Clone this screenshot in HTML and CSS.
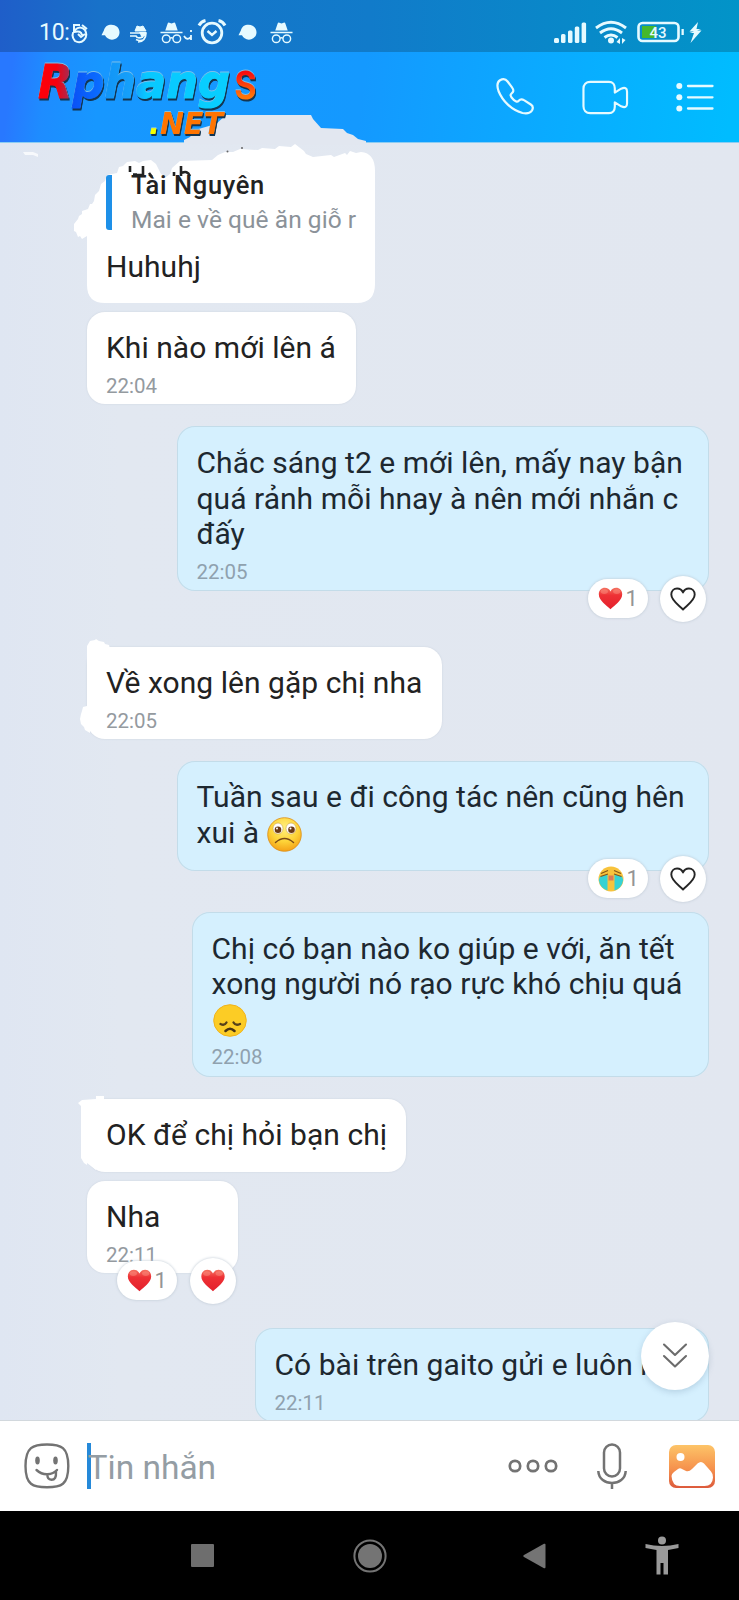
FILE: index.html
```html
<!DOCTYPE html>
<html lang="vi">
<head>
<meta charset="utf-8">
<title>Tin nhắn</title>
<link rel="stylesheet" href="styles.css">
</head>
<body>
<svg width="0" height="0" class="defs">
  <defs>
    <linearGradient id="heartFill" x1="0" y1="0" x2="0" y2="1"><stop offset="0" stop-color="#f4705f"/><stop offset=".35" stop-color="#ee3135"/><stop offset="1" stop-color="#e3202c"/></linearGradient>
    <radialGradient id="face" cx=".5" cy=".3" r=".75"><stop offset="0" stop-color="#fff07c"/><stop offset=".55" stop-color="#fdd338"/><stop offset="1" stop-color="#f39a12"/></radialGradient>
    <linearGradient id="photo" x1="0" y1="0" x2="0" y2="1"><stop offset="0" stop-color="#fdc468"/><stop offset=".55" stop-color="#f6924d"/><stop offset="1" stop-color="#dc5a3c"/></linearGradient>
    <linearGradient id="brand" gradientUnits="userSpaceOnUse" x1="37" y1="0" x2="232" y2="0"><stop offset="0" stop-color="#ff0008"/><stop offset=".1" stop-color="#f5000e"/><stop offset=".165" stop-color="#a82a52"/><stop offset=".175" stop-color="#0a50f5"/><stop offset=".32" stop-color="#0a6cff"/><stop offset=".36" stop-color="#1295f6"/><stop offset=".5" stop-color="#16a2fb"/><stop offset=".56" stop-color="#08c8ff"/><stop offset="1" stop-color="#08cfff"/></linearGradient>
    <linearGradient id="brandS" x1="0" y1="0" x2="0" y2="1"><stop offset=".35" stop-color="#f80d10"/><stop offset=".75" stop-color="#ff7408"/></linearGradient>
    <symbol id="heart" viewBox="0 0 26 24"><path d="M13 23.300C9 19 .8 14.500.8 7.600.8 3.600 3.600.9 7.100.9c2.700 0 4.800 1.400 5.900 3.700C14.100 2.300 16.200.9 18.900.9c3.500 0 6.300 2.700 6.300 6.700 0 6.900-8.200 11.400-12.200 15.700z" fill="url(#heartFill)"/><ellipse cx="6.500" cy="4.800" rx="3.800" ry="2.500" fill="#ffb09a" opacity=".35"/><ellipse cx="19.500" cy="4.800" rx="3.800" ry="2.500" fill="#ffb09a" opacity=".35"/></symbol>
    <symbol id="heartLine" viewBox="0 0 26 24"><path d="M13 22.500C9.500 18.500 1.300 14 1.300 7.600 1.300 4 3.900 1.500 7.100 1.500c2.800 0 4.900 1.600 5.900 4 1-2.400 3.100-4 5.900-4 3.200 0 5.800 2.500 5.800 6.100 0 6.400-8.200 10.900-11.700 14.900z" fill="none" stroke="#252525" stroke-width="1.900" stroke-linejoin="round"/></symbol>
    <symbol id="spy" viewBox="0 0 24 22"><path d="M5.500 8.500 8 1q.5-1.200 1.800-.7l2.200.7 2.200-.7q1.300-.5 1.800.7l2.500 7.500zM.5 9.800h23v1.500H.5z" fill="currentColor" stroke="none"/><g fill="none" stroke="currentColor" stroke-width="1.500"><circle cx="6.500" cy="17" r="4"/><circle cx="17.500" cy="17" r="4"/><path d="M10.500 16.500q1.500-1 3 0"/></g></symbol>
    <symbol id="chatdot" viewBox="0 0 20 18"><path d="M3 7C4 2.500 7 .8 11 .8c4.500 0 8.500 3 8.500 8 0 4.500-3.500 7.700-8 7.700-3.500 0-6-1.800-7.300-4.500L.5 12z" fill="currentColor" stroke="none"/></symbol>
  </defs>
</svg>

<div class="phone">
  <div class="top">
    <div class="status">
      <span class="clock">10:</span>
      <svg class="notices" width="225" height="30" viewBox="70 18 225 30" fill="none" stroke="currentColor">
        <path d="M80 25h-6v7q7-2 8 3M82 25l5 4M75 30q5-5 10 0 3 6-1 10-4 4-9 1-5-6 0-11M78 34l3 3 4-3" stroke-width="2"/>
        <use href="#chatdot" x="101" y="23.500" width="19" height="18"/>
        <path d="M135 31l2-5 3 1 3-1 3 5z" fill="currentColor" stroke-width="1"/><path d="M130 33h16c0 5-3 9-8 9M130 36h6q1 3 7 1M136 39.500q4 2 8 0" stroke-width="1.700"/><path d="M139 32h7v3l-4 3z" fill="currentColor" stroke="none"/>
        <use href="#spy" x="160" y="22" width="23" height="22"/>
        <path d="M184 36q3 5 7 1M191 30v2M191 35v5" stroke-width="1.800"/>
        <circle cx="212" cy="33" r="9.800" stroke-width="2.800"/><path d="m207.500 31 4.500 4 4.500-4" stroke-width="2.400"/><path d="M199 25.500q2-4 6.500-5M225 25.500q-2-4-6.500-5" stroke-width="3"/>
        <use href="#chatdot" x="238" y="23.500" width="19" height="18"/>
        <use href="#spy" x="270" y="22" width="23" height="22"/>
      </svg>
      <svg class="signals" width="150" height="30" viewBox="552 18 150 30" fill="currentColor">
        <rect x="554" y="38" width="5" height="5" rx="1.500"/><rect x="561" y="34" width="4.500" height="9" rx="1.500"/><rect x="568" y="30.500" width="4.500" height="12.500" rx="1.500"/><rect x="574.800" y="26.500" width="4.500" height="16.500" rx="1.500"/><rect x="581.600" y="22.500" width="4.500" height="20.500" rx="1.500"/>
        <g fill="none" stroke="currentColor" stroke-width="2.900"><path d="M596 28q15-11.500 30 0M600 33q11-8.500 22 0M604.500 37.500q6.500-5 13 0"/></g><circle cx="611" cy="40.500" r="3"/><path d="m616.500 42 3.500-4v6zM625.500 40l-3.500 4v-6z"/>
        <rect x="638.500" y="23" width="40" height="18" rx="4" fill="none" stroke="currentColor" stroke-width="2.600"/><rect x="642" y="26" width="14" height="12" fill="#45b82b"/><rect x="681.500" y="29" width="2.300" height="6"/>
        <text x="649.500" y="38" class="battery">43</text>
        <path d="M698 22 689.500 31.500h4.500l-4.500 1.500h4.500l-3.500 10 11-12.500h-4.500l4-1.500h-4.500z"/>
      </svg>
    </div>
    <div class="header">
      <svg class="call" width="38" height="38" viewBox="0 0 38 38"><path d="M4 2.300C1.300 4 .8 8 2.500 13c4 10 13 19 24 22 4 .8 8-.2 9.500-2.500 1.300-2.400.8-4.700-1.200-6L28 22.200c-2.200-1.500-3.700-1.200-5.300.5-1.200 1.400-2.700 1.200-5-.8-2-1.800-3-3.200-3.200-4.700 0-1.600 2.500-2.300 2.800-4.200.2-1.300-.4-2.400-1.500-3.900L11.600 3.500C9.500.7 7 .5 4 2.300z" fill="none" stroke="currentColor" stroke-width="2.200"/></svg>
      <svg class="video" width="47" height="35" viewBox="0 0 48 35"><g fill="none" stroke="currentColor" stroke-width="2.200" stroke-linejoin="round"><path d="M8.500 1.500h19c4 0 6 3 6 6.500v4.500l6.500-4q6-2.500 6 3v12q0 5.500-6 3l-6.500-4V27c0 3.500-2 6.500-6 6.500h-19c-4.500 0-7-3-7-7V8.500c0-4 2.500-7 7-7z"/></g></svg>
      <svg class="list" width="38" height="30" viewBox="0 0 38 30"><g fill="currentColor"><circle cx="3.300" cy="4" r="3"/><circle cx="3.300" cy="15.300" r="3"/><circle cx="3.300" cy="26.500" r="3"/></g><path d="M12 4h24.500M12 15.300h24.500M12 26.500h24.500" stroke="currentColor" stroke-width="2.300" stroke-linecap="round"/></svg>
    </div>
  </div>

  <div class="chat">
    <div class="bubble quoted">
      <svg class="torn" width="320" height="194" viewBox="70 112 320 194">
        <path d="M184 144 184 140 190 137 195 130 216 124 226 115H311L313 119 321 128 343 129 347 133 353 135 358 139 366 141V145z" fill="#e2e7f0"/>
        <path d="M24 153" fill="none"/>
        <path d="M87 285V236L82 239 80 236 78 237 76 232 74 231V224L78 219 79 216 82 214 82 211 88 209 90 204 92 204 94 201 95 195 99 191 101 184 105 181 107 175 117 173 119 167 123 166 127 162 135 161 139 163 143 161 151 160 156 164 161 174 166 177 170 174 172 168 180 161 212 160 218 155 225 152 233 152 240 149 258 150 262 148 275 149 279 146 291 147 295 144 304 151 306 154 313 157 331 155 334 157 345 153 347 155 350 151 356 153 361 152Q375 153 375 171V284Q375 303 357 303H105Q87 303 87 285z" fill="#fff"/>
        <path d="M130 166v6M137 174.500h-4M143 166v9h-6M149 173l3 4M174 172v4M181 166v10M182 173q5-3 8 3" fill="none" stroke="#222" stroke-width="2.600"/>
        <circle cx="227.500" cy="151.500" r="1" fill="#666"/><circle cx="242" cy="148" r="1" fill="#666"/>
      </svg>
      <div class="quote"><b>Tài Nguyên</b><span>Mai e về quê ăn giỗ r</span></div>
      <p>Huhuhj</p>
    </div>
    <svg class="speck" width="16" height="6" viewBox="0 0 16 6"><path d="M0 0h10l5 2v3l-5-2H2z" fill="#f7f9fc"/></svg>
    <div class="bubble b2"><p>Khi nào mới lên á</p><time>22:04</time></div>

    <div class="bubble mine b3"><p>Chắc sáng t2 e mới lên, mấy nay bận<br>quá rảnh mỗi hnay à nên mới nhắn c<br>đấy</p><time>22:05</time>
      <div class="reacts"><span class="pill"><svg width="25" height="23"><use href="#heart"/></svg>1</span><span class="round"><svg width="26" height="24"><use href="#heartLine"/></svg></span></div>
    </div>

    <div class="bubble b4"><svg class="smudge" width="32" height="104" viewBox="78 638 32 104"><path d="M87 665V646l3-5 5-1 1-1 3 2 5 1 1 2 4 1 1 4v5zM87 706l-4 1-1 4-1 3-1 5 1 5 3 3 1 3 5 3V706z" fill="#fff"/></svg><p>Về xong lên gặp chị nha</p><time>22:05</time></div>

    <div class="bubble mine b5"><p>Tuần sau e đi công tác nên cũng hên<br>xui à <svg class="emoji" width="35" height="35" viewBox="0 0 35 35"><circle cx="17.500" cy="17.500" r="16.800" fill="url(#face)" stroke="#dc8c14" stroke-width=".8"/><ellipse cx="11" cy="11.500" rx="5" ry="5.500" fill="#fff" stroke="#caa04a" stroke-width=".6"/><ellipse cx="24" cy="11.500" rx="5" ry="5.500" fill="#fff" stroke="#caa04a" stroke-width=".6"/><circle cx="11" cy="12.800" r="3.300" fill="#6b3a16"/><circle cx="24.500" cy="12.800" r="3.300" fill="#6b3a16"/><circle cx="10" cy="11.500" r="1" fill="#fff"/><circle cx="23.500" cy="11.500" r="1" fill="#fff"/><path d="M8.500 25.500q9-8 18 0" fill="none" stroke="#7a4a17" stroke-width="1.500" stroke-linecap="round"/></svg></p>
      <div class="reacts"><span class="pill"><svg width="26" height="26" viewBox="0 0 26 26"><circle cx="13" cy="13" r="12.500" fill="#f8c33c"/><path d="M2 10.500 9.500 8.500V24.500Q2 22 .8 14zM24 10.500 16.500 8.500V24.500Q24 22 25.200 14z" fill="#36d2d4"/><path d="M10.500 9.500h5v5h-5z" fill="#d97a58"/><path d="M3 7.500 10 4.500M23 7.500 16 4.500M2.500 10.500 10 8M23.500 10.500 16 8" stroke="#835519" stroke-width="1.300"/></svg>1</span><span class="round"><svg width="26" height="24"><use href="#heartLine"/></svg></span></div>
    </div>

    <div class="bubble mine b6"><p>Chị có bạn nào ko giúp e với, ăn tết<br>xong người nó rạo rực khó chịu quá<br><svg class="emoji flat" width="35" height="33" viewBox="0 0 35 33"><ellipse cx="18" cy="16.500" rx="16.300" ry="15.800" fill="#fccc25" stroke="#f0b31c"/><path d="M8.500 20q4 2 6-1.500M21.500 18.500q2 3.500 6.500 1.500" fill="none" stroke="#56401a" stroke-width="2.300" stroke-linecap="round"/><path d="M13.500 27q4.500-4.500 9 0" fill="none" stroke="#4a3515" stroke-width="2.500" stroke-linecap="round"/></svg></p><time>22:08</time></div>

    <div class="bubble b7"><svg class="smudge" width="36" height="76" viewBox="78 1094 36 76"><path d="M104 1102v-6h-8v3l-14 1-4 3 3 3v52l3 5 3 2v-2l9 7V1102z" fill="#fff"/></svg><p>OK để chị hỏi bạn chị</p></div>
    <div class="bubble b8"><p>Nha</p><time>22:11</time>
      <div class="reacts left"><span class="pill"><svg width="25" height="23"><use href="#heart"/></svg>1</span><span class="round"><svg width="26" height="23"><use href="#heart"/></svg></span></div>
    </div>
    <div class="bubble mine b9"><p>Có bài trên gaito gửi e luôn n</p><time>22:11</time></div>
    <div class="jump"><svg width="26" height="28" viewBox="0 0 26 28"><path d="M2 2.500 13 13 24 2.500M2 14 13 24.500 24 14" fill="none" stroke="#6c6c6c" stroke-width="2.100" stroke-linecap="round" stroke-linejoin="round"/></svg></div>
  </div>

  <div class="composer">
    <svg class="sticker" width="46" height="46" viewBox="0 0 46 46"><g fill="none" stroke="#737373" stroke-width="2.400"><path d="M23 1.500C37 1.500 44.300 4 44.300 23S37 44.300 23 44.300 1.500 42 1.500 23 9 1.500 23 1.500z"/><path d="M12.500 27q5 4.500 11 4.200 6-.2 9.500-4.200M23.500 31.500q-.5 5 4 5.300 5 0 4.500-8" stroke-linecap="round"/></g><ellipse cx="13.500" cy="17.500" rx="2.300" ry="4" fill="#737373"/><ellipse cx="31.500" cy="17.500" rx="2.300" ry="4" fill="#737373"/></svg>
    <div class="field"><span>Tin nhắn</span></div>
    <svg class="more" width="50" height="14" viewBox="0 0 50 14"><g fill="none" stroke="#737373" stroke-width="2.700"><circle cx="7" cy="7" r="5.200"/><circle cx="25" cy="7" r="5.200"/><circle cx="43" cy="7" r="5.200"/></g></svg>
    <svg class="mic" width="30" height="46" viewBox="0 0 30 46"><g fill="none" stroke="#737373" stroke-width="2.500"><rect x="7" y="1.500" width="16" height="32" rx="8"/><path d="M1.300 28C2 44 28 44 28.700 28M15 40v6"/></g></svg>
    <svg class="gallery" width="46" height="43" viewBox="0 0 46 43"><rect width="46" height="43" rx="7" fill="url(#photo)"/><circle cx="11.500" cy="12" r="4" fill="#fff"/><path d="M2.500 31Q2.500 29 5 27L9 24q2-1.500 4 0l4 2q3 1 6-2l5.500-5.500q3.500-3 6.500 0l7 8q2 2 2 6-.5 8.500-8.500 8.500H11Q3 41 2.500 31z" fill="#fff"/></svg>
  </div>

  <div class="nav">
    <svg class="recent" width="23" height="23"><rect width="23" height="23" rx="1" fill="#6e6e6e"/></svg>
    <svg class="home" width="34" height="34" viewBox="0 0 34 34"><circle cx="17" cy="17" r="15.600" fill="none" stroke="#747474" stroke-width="2"/><circle cx="17" cy="17" r="12" fill="#747474"/></svg>
    <svg class="back" width="23" height="26" viewBox="0 0 23 26"><path d="M1 12 21 .8q1.500-.5 1.500 1v22.400q0 1.500-1.500 1L1 14q-1.500-1 0-2z" fill="#747474"/></svg>
    <svg class="access" width="34" height="39" viewBox="0 0 34 39"><circle cx="17" cy="4.500" r="4" fill="#9a9a9a"/><path d="M.5 8Q17 12 33.500 8V12L23 14V38.500H18.500V27H15.500V38.500H11.500V14L.5 12z" fill="#9a9a9a"/></svg>
  </div>

  <svg class="brandmark" width="245" height="90" viewBox="30 54 245 90">
    <text class="techno" x="38" y="98" textLength="192" lengthAdjust="spacingAndGlyphs" fill="url(#brand)" stroke="url(#brand)" stroke-width="1">Rphang</text>
    <text class="ess" x="234" y="99" textLength="23" lengthAdjust="spacingAndGlyphs" fill="url(#brandS)">s</text>
    <text class="net" x="149" y="134" textLength="74" lengthAdjust="spacingAndGlyphs" fill="#ff7400"><tspan fill="#f4ff00">.</tspan>NET</text>
  </svg>
</div>
</body>
</html>
```
FILE: styles.css
```css
* { box-sizing: border-box; }
body { margin: 0; font-family: Roboto, "Noto Sans", sans-serif; background: #000; }
svg { display: block; flex: none; }
.defs { position: absolute; }
.phone { position: relative; width: 739px; height: 1600px; display: flex; flex-direction: column; overflow: hidden; }

.top { height: 143px; flex: none; color: #e6faff; background: linear-gradient(97deg, #2878ff 20px, #1e8cff 55px, #1797ff 110px, #1499ff 370px, #00bcff 739px); border-bottom: 1px solid #8ccdf3; }
.status { height: 52px; display: flex; align-items: center; padding: 14px 37px 0 39px; background: linear-gradient(90deg, #1f5ec9, #1872c9 100px, #117bca 370px, #0294c8 739px); }
.clock { width: 31px; font-size: 23px; line-height: 26px; letter-spacing: -.3px; white-space: nowrap; }
.signals { margin-left: auto; }
.battery { font: 500 15px Roboto, sans-serif; }
.header { height: 90px; display: flex; align-items: center; justify-content: flex-end; padding: 0 25px 0 0; }
.call { margin-right: 48px; }
.video { margin-right: 47px; }

.chat { position: relative; height: 1277px; flex: none; display: flex; flex-direction: column; align-items: flex-start; padding: 9px 30px 0 87px; background: linear-gradient(90deg, #dfe6f2, #e2e8f1 120px, #e2e7f0); }
.bubble { position: relative; flex: none; height: 92px; padding: 18px 19px 0; border-radius: 18px; background: #fff; box-shadow: 0 0 2px #c9d1dc; color: #222; }
.bubble p { position: relative; margin: 0; font-size: 30px; line-height: 35.500px; letter-spacing: .04px; white-space: nowrap; }
.bubble time { display: block; position: relative; margin-top: 8px; font-size: 20.500px; line-height: 24px; color: #949a9f; }
.mine { align-self: flex-end; padding-left: 19.500px; background: #d5f0fe; box-shadow: inset 0 0 0 1px #c3dce9; color: #1d2830; }
.mine time { color: #8fa1ae; }

.quoted { width: 288px; height: 151px; background: none; box-shadow: none; }
.torn { position: absolute; left: -17px; top: -40px; }
.speck { position: absolute; left: 23px; top: 9px; }
.quote { position: relative; display: flex; flex-direction: column; height: 55px; margin-top: 5px; padding-left: 19px; border-left: 6px solid #1e90e8; border-radius: 3px; white-space: nowrap; }
.quote b { font-size: 25.500px; letter-spacing: .65px; line-height: 28px; font-weight: 500; margin-top: -4px; }
.quote span { font-size: 24.500px; letter-spacing: .05px; line-height: 30px; margin-top: 5.500px; color: #8b9299; }
.quoted p { margin-top: 18.500px; }
.b2 { width: 268.500px; margin-top: 9px; }
.b3 { width: 532px; height: 165px; margin-top: 22px; padding-top: 19px; }
.b4 { width: 354.500px; margin-top: 56px; }
.b5 { width: 532px; height: 110px; margin-top: 22px; }
.b6 { width: 517px; height: 165px; margin-top: 41px; padding-top: 18.500px; }
.b7 { width: 319px; height: 73px; margin-top: 22px; }
.b8 { width: 151px; margin-top: 9px; }
.b9 { width: 454px; height: 94px; margin-top: 55px; padding-top: 19px; }
.smudge { position: absolute; left: -9px; top: -9px; }
.b7 .smudge { top: -5px; }
.emoji { display: inline-block; position: relative; top: -2px; vertical-align: -6px; margin: -7px 0 -5px 0; }
.flat { top: -4px; }

.reacts { position: absolute; right: 3px; bottom: -30.500px; display: flex; align-items: center; gap: 12.500px; }
.reacts.left { right: auto; left: 29.500px; gap: 13px; }
.pill { display: flex; align-items: center; gap: 3px; width: 60px; height: 39px; padding-left: 10px; border-radius: 20px; background: #fff; box-shadow: 0 0 3px #bac5d0; font-size: 22px; color: #949494; }
.round { display: grid; place-items: center; width: 46px; height: 46px; border-radius: 50%; background: #fff; box-shadow: 0 0 3px #bac5d0; }
.jump { position: absolute; left: 641px; top: 1179px; width: 68px; height: 68px; border-radius: 50%; background: #fff; box-shadow: 0 2px 6px rgba(70, 100, 130, .22); display: grid; place-items: center; }

.composer { position: relative; flex: none; height: 91px; display: flex; align-items: center; padding: 0 24px; background: #fff; border-top: 1px solid #d2d8dd; }
.sticker { margin-right: 17px; }
.field { height: 46px; line-height: 49px; font-size: 33.500px; color: #949da4; border-left: 4px solid #2589d9; }
.field span { margin-left: -3.500px; }
.more { margin-left: auto; }
.mic { margin: 0 42px 0 39px; }
.nav { flex: 1; display: flex; align-items: center; background: #000; padding-left: 191px; }
.home { margin-left: 139px; }
.back { margin-left: 136px; }
.access { margin-left: 99px; }

.brandmark { position: absolute; left: 30px; top: 54px; filter: drop-shadow(0 -.5px 0 #7cbfe8) drop-shadow(1px 2px 0 #143652); }
.techno { font: italic 700 47px "DejaVu Sans", sans-serif; }
.ess { font: 500 51px Roboto, sans-serif; }
.net { font: italic 700 31px "DejaVu Sans", sans-serif; }
```
